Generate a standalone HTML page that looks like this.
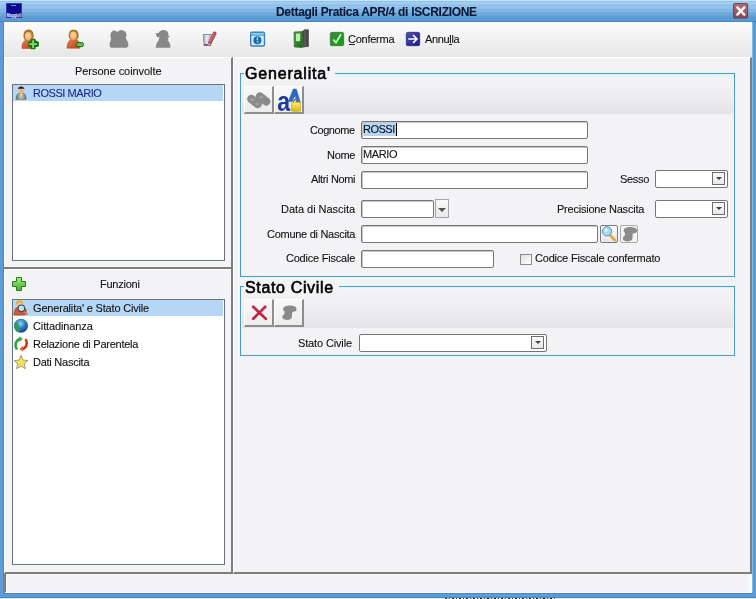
<!DOCTYPE html>
<html><head><meta charset="utf-8">
<style>
*{margin:0;padding:0;box-sizing:border-box}
html,body{width:756px;height:599px;overflow:hidden}
body{position:relative;background:#5b9bd6;font-family:"Liberation Sans",sans-serif;font-size:11px;color:#000}
.a{position:absolute}
svg.a{overflow:visible}
.t{position:absolute;white-space:nowrap;line-height:1;color:#111;letter-spacing:-0.3px;-webkit-text-stroke:0.1px currentColor;will-change:transform}
#title{left:0;top:0;width:756px;height:22px;background:linear-gradient(#c2e4fc 0px,#c2e4fc 1px,#a6d0f2 1px,#9ac8ee 5px,#8ebfe9 9px,#7db3e2 12px,#6aa6da 15px,#5b9bd3 17px,#5a9ad2 21px,#4a7cb0 21px,#4a7cb0 22px)}
#stripes{left:0;top:1px;width:756px;height:16px;background:repeating-linear-gradient(rgba(50,100,160,.12) 0px,rgba(50,100,160,.12) 1px,rgba(255,255,255,0) 1px,rgba(255,255,255,0) 4px)}
.inp{position:absolute;background:#fff;border:1px solid #767676;border-radius:2px;height:18px;box-shadow:inset 1px 1px 0 #c8c8c8}
.cmb{position:absolute;background:#fff;border:1px solid #767676;border-radius:2px;height:18px}
.dd{position:absolute;width:13px;height:13px;border:1px solid #6e6e6e;background:linear-gradient(#fafafa,#e8e8e8)}
.dd:after{content:"";position:absolute;left:2.5px;top:4px;border-left:3.5px solid transparent;border-right:3.5px solid transparent;border-top:3.5px solid #404040}
.lbl{position:absolute;white-space:nowrap;line-height:1;text-align:right;color:#111;letter-spacing:-0.3px;-webkit-text-stroke:0.1px currentColor;will-change:transform}
.grp{position:absolute;border:1px solid #4e9cbc;box-shadow:inset 1px 1px 0 #dcf8fe, 0 0 0 1px #e0fafe}
.gt{position:absolute;will-change:transform;white-space:nowrap;line-height:1;font-size:15px;font-weight:normal;-webkit-text-stroke:0.6px #000;letter-spacing:0.95px;color:#000;background:#f3f3f6;padding:0 6px 0 2px}
.tbs{position:absolute;background:linear-gradient(#f4f4f6,#efeff1 45%,#e4e4e6)}
.btn{position:absolute;width:30px;height:28px;background:linear-gradient(#f8f8f8,#ececec);border-right:2px solid #8d8d8d;border-bottom:2px solid #8d8d8d;border-top:1px solid #fff;border-left:1px solid #fff}
</style></head><body>
<!-- title bar -->
<div id="title" class="a"></div>
<div id="stripes" class="a"></div>
<div class="t" style="left:276px;top:6px;font-size:12px;font-weight:bold;color:#0c1838;letter-spacing:-0.3px">Dettagli Pratica APR/4 di ISCRIZIONE</div>

<!-- client -->
<div class="a" style="left:3px;top:21px;width:750px;height:573px;background:#4f86bb"></div>
<div class="a" style="left:4px;top:22px;width:748px;height:571px;background:#f3f3f6"></div>
<!-- toolbar -->
<div class="a" style="left:4px;top:22px;width:748px;height:35px;background:linear-gradient(#fbfbfb,#f2f2f2 50%,#e6e6e6)"></div>

<!-- toolbar icons -->
<div class="t" style="left:348px;top:34px;letter-spacing:-0.25px">Conferma</div>
<div class="a" style="left:349px;top:44px;width:6px;height:1px;background:#222"></div>
<div class="t" style="left:425px;top:34px;letter-spacing:-0.35px">Annulla</div>
<div class="a" style="left:449px;top:44px;width:3px;height:1px;background:#222"></div>

<!-- left panel -->
<div class="a" style="left:4px;top:57px;width:229px;height:517px;background:#f3f3f6;border-top:1px solid #fff;border-left:1px solid #fff;border-right:2px solid #7d7d7d;border-bottom:2px solid #7d7d7d"></div>
<div class="a" style="left:4px;top:267px;width:227px;height:2px;background:#7d7d7d"></div>
<div class="a" style="left:4px;top:269px;width:227px;height:1px;background:#fff"></div>
<div class="t" style="left:75px;top:66px;letter-spacing:-0.05px">Persone coinvolte</div>
<div class="a" style="left:12px;top:84px;width:213px;height:177px;background:#fff;border:1px solid #6a747e"></div>
<div class="a" style="left:13px;top:85px;width:210px;height:16px;background:#b6d6f6"></div>
<div class="t" style="left:32.5px;top:88px;color:#1a2a8a;letter-spacing:-0.45px">ROSSI MARIO</div>

<div class="t" style="left:100px;top:279px;letter-spacing:-0.25px">Funzioni</div>
<div class="a" style="left:12px;top:299px;width:213px;height:266px;background:#fff;border:1px solid #6a747e"></div>
<div class="a" style="left:13px;top:300px;width:210px;height:16px;background:#b6d6f6"></div>
<div class="t" style="left:33px;top:303px;letter-spacing:-0.18px">Generalita' e Stato Civile</div>
<div class="t" style="left:33px;top:321px;letter-spacing:-0.12px">Cittadinanza</div>
<div class="t" style="left:33px;top:339px;letter-spacing:-0.25px">Relazione di Parentela</div>
<div class="t" style="left:33px;top:357px;letter-spacing:-0.25px">Dati Nascita</div>

<!-- right panel -->
<div class="a" style="left:233px;top:57px;width:519px;height:517px;background:#f3f3f6;border-top:1px solid #fff;border-left:1px solid #fff;border-right:2px solid #7d7d7d;border-bottom:2px solid #7d7d7d"></div>

<!-- Generalita group -->
<div class="grp" style="left:240px;top:73px;width:495px;height:204px"></div>
<div class="tbs" style="left:242px;top:75px;width:491px;height:39px"></div>
<div class="gt" style="left:244px;top:66px;font-size:16px;letter-spacing:0.82px;padding:0 3.8px 0 1px">Generalita'</div>
<div class="btn" style="left:244px;top:86px"></div>
<div class="btn" style="left:274px;top:86px"></div>

<div class="lbl" style="right:401px;top:125px;letter-spacing:-0.45px">Cognome</div>
<div class="inp" style="left:361px;top:121px;width:227px"></div>
<div class="a" style="left:363px;top:123px;width:33px;height:13px;background:#b6d6f6"></div>
<div class="a" style="left:396px;top:123px;width:1px;height:13px;background:#000"></div>
<div class="t" style="left:363px;top:124px;letter-spacing:-0.5px">ROSSI</div>
<div class="lbl" style="right:401px;top:150px">Nome</div>
<div class="inp" style="left:361px;top:146px;width:227px"></div>
<div class="t" style="left:363px;top:149px;letter-spacing:-0.4px">MARIO</div>
<div class="lbl" style="right:401px;top:174px;letter-spacing:-0.35px">Altri Nomi</div>
<div class="inp" style="left:361px;top:171px;width:227px"></div>
<div class="lbl" style="right:107px;top:174px;letter-spacing:-0.3px">Sesso</div>
<div class="cmb" style="left:655px;top:170px;width:73px"></div>
<div class="dd" style="left:712px;top:172px"></div>

<div class="lbl" style="right:401px;top:204px;letter-spacing:-0.04px">Data di Nascita</div>
<div class="inp" style="left:361px;top:200px;width:73px"></div>
<div class="a" style="left:435px;top:199px;width:14px;height:19px;border:1px solid #a4a4a4;background:linear-gradient(#f8f8f8,#e8e8ea)"></div>
<div class="a" style="left:437.5px;top:207.5px;width:0;height:0;border-left:4.5px solid transparent;border-right:4.5px solid transparent;border-top:4.5px solid #505050"></div>
<div class="lbl" style="right:112px;top:204px;letter-spacing:-0.22px">Precisione Nascita</div>
<div class="cmb" style="left:655px;top:200px;width:73px"></div>
<div class="dd" style="left:712px;top:202px"></div>

<div class="lbl" style="right:401px;top:229px;letter-spacing:-0.28px">Comune di Nascita</div>
<div class="inp" style="left:361px;top:225px;width:237px"></div>
<div class="a" style="left:600px;top:225px;width:18px;height:18px;border:1px solid #7a7a7a;border-radius:2px;background:linear-gradient(#fafafa,#e6e6f0)"></div>
<div class="a" style="left:620px;top:225px;width:18px;height:18px;border:1px solid #a8a8a8;border-radius:2px;background:#f4f4f4"></div>

<div class="lbl" style="right:401px;top:253px;letter-spacing:-0.22px">Codice Fiscale</div>
<div class="inp" style="left:361px;top:250px;width:133px"></div>
<div class="a" style="left:520px;top:254px;width:12px;height:11px;border:1px solid #8a8a8a;background:linear-gradient(135deg,#e0e0e0,#fff)"></div>
<div class="t" style="left:534.5px;top:253px;letter-spacing:-0.2px">Codice Fiscale confermato</div>

<!-- Stato civile group -->
<div class="grp" style="left:240px;top:286px;width:495px;height:70px"></div>
<div class="tbs" style="left:242px;top:288px;width:491px;height:40px"></div>
<div class="gt" style="left:243.5px;top:279.5px;font-size:16px;letter-spacing:0.65px;padding:0 5.4px 0 1px">Stato Civile</div>
<div class="btn" style="left:244px;top:299px"></div>
<div class="btn" style="left:274px;top:299px"></div>
<div class="lbl" style="right:404px;top:338px;letter-spacing:-0.14px">Stato Civile</div>
<div class="cmb" style="left:359px;top:334px;width:188px"></div>
<div class="dd" style="left:531px;top:336px"></div>

<!-- status bar -->
<div class="a" style="left:4px;top:574px;width:748px;height:19px;background:#f4f4f7;border-left:2px solid #7d7d7d;border-bottom:1px solid #fff;border-right:3px solid #fbfbfd"></div>
<div class="a" style="left:752px;top:22px;width:1px;height:571px;background:#84b6e2"></div>
<div class="a" style="left:0;top:597px;width:756px;height:1px;background:#4f86ba"></div>
<div class="a" style="left:0;top:598px;width:756px;height:1px;background:#dde9f5"></div>
<div class="a" style="left:445px;top:598px;width:112px;height:1px;background:repeating-linear-gradient(90deg,#222 0 2px,transparent 2px 4px,#444 4px 5px,transparent 5px 7px)"></div>
<svg class="a" style="left:0;top:0;pointer-events:none" width="756" height="599" viewBox="0 0 756 599">
<defs>
 <filter id="bl" x="-20%" y="-20%" width="140%" height="140%"><feGaussianBlur stdDeviation="0.45"/></filter>
 <filter id="bl2" x="-20%" y="-20%" width="140%" height="140%"><feGaussianBlur stdDeviation="0.3"/></filter>
 <radialGradient id="face" cx="0.45" cy="0.4" r="0.65"><stop offset="0" stop-color="#ffdca8"/><stop offset="1" stop-color="#eaa058"/></radialGradient>
 <linearGradient id="body" x1="0" y1="0" x2="1" y2="1"><stop offset="0" stop-color="#f08048"/><stop offset="1" stop-color="#b83818"/></linearGradient>
 <linearGradient id="gck" x1="0" y1="0" x2="1" y2="1"><stop offset="0" stop-color="#3a8a3a"/><stop offset="1" stop-color="#10a010"/></linearGradient>
 <linearGradient id="gar" x1="0" y1="0" x2="1" y2="1"><stop offset="0" stop-color="#5050a8"/><stop offset="1" stop-color="#1a1a90"/></linearGradient>
 <linearGradient id="doc" x1="0" y1="0" x2="1" y2="0"><stop offset="0" stop-color="#a0a8b8"/><stop offset="0.45" stop-color="#e4eaf6"/><stop offset="1" stop-color="#a8b0c0"/></linearGradient>
 <linearGradient id="gbk" x1="0" y1="0" x2="1" y2="1"><stop offset="0" stop-color="#50a050"/><stop offset="1" stop-color="#1a6a1a"/></linearGradient>
 <linearGradient id="suit" x1="0" y1="0" x2="1" y2="0"><stop offset="0" stop-color="#6a746a"/><stop offset="0.5" stop-color="#c4ccbc"/><stop offset="1" stop-color="#6a746a"/></linearGradient>
 <linearGradient id="gpl" x1="0" y1="0" x2="0" y2="1"><stop offset="0" stop-color="#a0f080"/><stop offset="1" stop-color="#40b030"/></linearGradient>
 <radialGradient id="glb" cx="0.45" cy="0.35" r="0.7"><stop offset="0" stop-color="#90d8fa"/><stop offset="0.5" stop-color="#2a78c0"/><stop offset="1" stop-color="#0a3a80"/></radialGradient>
 <linearGradient id="lock" x1="0" y1="0" x2="0" y2="1"><stop offset="0" stop-color="#f8f070"/><stop offset="1" stop-color="#e0b800"/></linearGradient>
</defs>

<!-- title logo -->
<rect x="6" y="3" width="16" height="15" fill="#0a0a8e"/>
<rect x="6.5" y="3.5" width="15" height="14" fill="none" stroke="#5a5ac0" stroke-width="0.6"/>
<rect x="11" y="5" width="5" height="0.8" fill="#a0a0e0"/>
<text x="6.8" y="16.8" font-family="Liberation Sans" font-weight="bold" font-size="5" fill="#fff" textLength="14.4" lengthAdjust="spacingAndGlyphs">Maggioli</text>

<!-- close button -->
<defs><linearGradient id="gcl" x1="0" y1="0" x2="0" y2="1"><stop offset="0" stop-color="#b87072"/><stop offset="1" stop-color="#8a4a58"/></linearGradient></defs>
<rect x="733.6" y="3.6" width="14" height="14.4" rx="1" fill="url(#gcl)" stroke="#5a3850" stroke-width="0.9"/>
<path d="M737.3 7.4 L744.3 14.6 M744.3 7.4 L737.3 14.6" stroke="#fff" stroke-width="2.3" stroke-linecap="round"/>

<!-- toolbar icon 1: person add -->
<g filter="url(#bl2)">
 <path d="M22 48.5 C21.8 44 23 41 26 40.3 L30 40.3 C32.5 41 34 43 34 48.5 Z" fill="url(#body)" stroke="#a84020" stroke-width="0.5"/>
 <path d="M23.6 37 C23 31.5 25.5 29.6 28.6 29.6 C31.8 29.6 34 31.5 33.6 37 C33.4 39.5 32 41 28.6 41 C25.2 41 23.8 39.5 23.6 37Z" fill="#a8782e"/>
 <ellipse cx="28.3" cy="36.3" rx="3.4" ry="4.3" fill="url(#face)"/>
 <path d="M31 39.2h4.2v2.8h3.2v4.2h-3.2v2.6h-4.2v-2.6h-2.4v-4.2h2.4z" fill="#1a6e1a" stroke="#1a6e1a" stroke-width="0.8" stroke-linejoin="round"/>
 <rect x="29.4" y="40.5" width="8.6" height="6.8" rx="2.5" fill="#1a6e1a"/>
 <path d="M32.2 40.3h1.9v2.9h2.9v1.9h-2.9v2.9h-1.9v-2.9h-2.9v-1.9h2.9z" fill="#80e064"/>
</g>
<!-- icon 2: person -->
<g filter="url(#bl2)">
 <path d="M67 48.2 C67 43 68.8 40 72 39.5 L75.5 39.5 C78.5 40 79.8 43 79.8 48.2 Z" fill="url(#body)" stroke="#a84020" stroke-width="0.5"/>
 <path d="M68.8 36.5 C68.3 31.5 70.5 29.8 73.7 29.8 C76.9 29.8 79 31.5 78.6 36.5 C78.4 39 77 40.3 73.7 40.3 C70.4 40.3 69 39 68.8 36.5Z" fill="#a8782e"/>
 <ellipse cx="73.4" cy="35.8" rx="3.4" ry="4.2" fill="url(#face)"/>
 <rect x="76" y="42.5" width="7.5" height="4.2" rx="2" fill="#58c048" stroke="#206a18" stroke-width="1"/>
</g>
<!-- icon 3: gray group -->
<g fill="#878787" filter="url(#bl)">
 <ellipse cx="114.3" cy="35.4" rx="3.9" ry="4.9"/>
 <ellipse cx="121.5" cy="35.2" rx="5" ry="5.3"/>
 <path d="M111 38 L126 38 L127 41 L110.5 41Z"/>
 <path d="M109.6 45 C109.6 41 111.5 39.3 115 39.3 L123 39.3 C126.5 39.3 128.3 41 128.3 45 C128.3 47.5 127 47.8 124 47.8 L113 47.8 C110.5 47.8 109.6 47.5 109.6 45Z"/>
</g>
<!-- icon 4: gray hat person -->
<g fill="#888" filter="url(#bl)">
 <ellipse cx="163.5" cy="34.8" rx="4.9" ry="4.9"/>
 <path d="M155.5 33.2 L159.5 32.8 L160.5 37 L157 37.3Z"/>
 <path d="M167 35.5 L170 36.3 L167.5 38.5Z"/>
 <path d="M159.5 37.5 L167.5 37.5 L168.5 40 L158.5 40Z"/>
 <path d="M155.8 47.7 C156 42.5 158.5 39.2 162 39 L164.5 39 C168 39.2 170.4 42.5 170.4 47.7Z"/>
</g>
<!-- icon 5: edit -->
<g filter="url(#bl2)">
 <path d="M203.2 34.5 L211.5 34.5 L211 44.8 L204 44.8Z" fill="url(#doc)" stroke="#7a8292" stroke-width="0.8"/>
 <path d="M203.8 45 L211 45" stroke="#2a3040" stroke-width="1.2"/>
 <path d="M214.6 33.4 L209.8 42.8" stroke="#b84858" stroke-width="3.8" stroke-linecap="round"/>
 <path d="M213.8 33.6 L209.6 42" stroke="#e890a0" stroke-width="0.8"/>
 <path d="M208.6 43.3 L208.4 45.2 L210.6 44.2Z" fill="#f0e8e0"/>
</g>
<!-- icon 6: info window -->
<g filter="url(#bl2)">
 <rect x="250.7" y="32.2" width="13.8" height="13.8" rx="1.5" fill="#d4eefa" stroke="#3a80b8" stroke-width="1.4"/>
 <rect x="251.4" y="32.9" width="12.4" height="1.8" fill="#80d0f2"/>
 <path d="M251 35.2 H264.2" stroke="#3a80b8" stroke-width="0.9"/>
 <circle cx="257.4" cy="40.3" r="4" fill="#1a68b0"/>
 <rect x="256.7" y="37.3" width="1.5" height="3" fill="#90e0fa"/>
 <rect x="256.7" y="41.2" width="1.5" height="1.5" fill="#90e0fa"/>
</g>
<!-- icon 7: green book -->
<g filter="url(#bl2)">
 <path d="M302 31.5 L304.5 29.3 L308.8 29.6 L308.8 46.8 L302.5 47.6Z" fill="#4a4a4a"/>
 <path d="M305 29.6 L305 46.5" stroke="#6e6e6e" stroke-width="0.7"/>
 <path d="M294 32 L302.4 31.6 L302.4 47.6 L294.3 47Z" fill="url(#gbk)" stroke="#1e5a1e" stroke-width="0.6"/>
 <rect x="296" y="33.6" width="4.2" height="7.6" fill="#b8f0b0"/>
</g>
<!-- check -->
<g filter="url(#bl2)">
 <rect x="330.3" y="32.3" width="13.4" height="13.4" rx="1.5" fill="url(#gck)" stroke="#1e6a1e" stroke-width="0.6"/>
 <path d="M333.3 39.6 L336 42.6 L341 34.2" fill="none" stroke="#c8ffc0" stroke-width="1.7"/>
</g>
<!-- arrow -->
<g filter="url(#bl2)">
 <rect x="406.3" y="32.3" width="13.4" height="13.4" rx="1.5" fill="url(#gar)" stroke="#14146a" stroke-width="0.6"/>
 <path d="M408.3 39 H417 M413 35 L417 39 L413 43" fill="none" stroke="#fff" stroke-width="1.6"/>
</g>

<!-- list person icon -->
<g filter="url(#bl2)">
 <path d="M16.2 99.3 C16.2 95 17.8 93 20.5 93 L22 93 C24.5 93 26.1 95 26.1 99.3Z" fill="url(#suit)" stroke="#56605a" stroke-width="0.6"/>
 <path d="M20.6 93.2 L21.2 97.5 L21.8 93.2Z" fill="#f0e8c8"/>
 <ellipse cx="21.2" cy="90.8" rx="2.6" ry="3" fill="#f2b474"/>
 <path d="M17.9 89.5 C17.9 85.5 24.4 85.5 24.4 89.5 L24 88.8 L18.3 88.8Z" fill="#2a1a10"/>
</g>

<!-- funzioni plus -->
<path d="M16.5 277.5 H21.5 V281.5 H25.5 V286.5 H21.5 V290.5 H16.5 V286.5 H12.5 V281.5 H16.5Z" fill="url(#gpl)" stroke="#2a7a20" stroke-width="1"/>

<!-- generalita icon -->
<g filter="url(#bl2)">
 <path d="M14 315 C14 310 15.5 307 19 307 L22 307 C25 307 26 309 26.5 311 L25 315Z" fill="#d05a38" stroke="#a03a20" stroke-width="0.6"/>
 <ellipse cx="19.5" cy="303.3" rx="3.5" ry="3" fill="#e0b050"/>
 <ellipse cx="19.8" cy="304.5" rx="2.4" ry="2.1" fill="#f6c890"/>
 <path d="M23.5 311.5 L27 314" stroke="#c88040" stroke-width="2" stroke-linecap="round"/>
 <circle cx="21.4" cy="308.3" r="3.3" fill="#b8e4f8" stroke="#404850" stroke-width="1.1"/>
</g>
<!-- globe -->
<g filter="url(#bl2)">
 <circle cx="21" cy="325.7" r="7" fill="url(#glb)"/>
 <path d="M14.3 323 C16 321.5 18.5 322.5 19 325 C19.5 327.5 21 328.5 20 331 C19.5 332.3 18 332.5 16.5 331.8 C14.5 330 13.8 326 14.3 323Z" fill="#30a050" opacity="0.8"/>
 <path d="M22 320 C24 319.5 26 320.5 26.5 322 C25 322.5 23.5 322 22 320Z" fill="#40b060" opacity="0.6"/>
</g>
<!-- relazione -->
<g filter="url(#bl2)">
 <path d="M16.5 348.5 C14.5 345 15.5 340.5 20 339" fill="none" stroke="#30a040" stroke-width="2.6" stroke-linecap="round"/>
 <path d="M19 336.3 L23 338.8 L19.5 342Z" fill="#40b048"/>
 <path d="M26 340 C28 344 26 348.5 21.5 349" fill="none" stroke="#c83820" stroke-width="2.6" stroke-linecap="round"/>
 <path d="M23 346 L19.5 349 L23 351.5Z" fill="#e86030"/>
</g>
<!-- star -->
<path d="M21 355.3 L23 360.1 L28 360.5 L24.2 363.7 L25.4 368.7 L21 366 L16.6 368.7 L17.8 363.7 L14 360.5 L19 360.1Z" fill="#f6e060" stroke="#9a9070" stroke-width="0.9" stroke-linejoin="round" filter="url(#bl2)"/>

<!-- binoculars -->
<defs><filter id="bl3" x="-20%" y="-20%" width="140%" height="140%"><feGaussianBlur stdDeviation="0.6"/></filter></defs>
<g fill="#8a8a8a" filter="url(#bl3)">
 <rect x="246.3" y="97.3" width="16.5" height="8.4" rx="4.2" transform="rotate(38 254.5 101.5)"/>
 <rect x="254.8" y="94.8" width="16.5" height="8.4" rx="4.2" transform="rotate(38 263 99)"/>
</g>
<g fill="#a0a0a0" filter="url(#bl3)"><ellipse cx="252.5" cy="99.5" rx="2.2" ry="1.6"/><ellipse cx="261" cy="97" rx="2.2" ry="1.6"/><ellipse cx="257" cy="104" rx="1.8" ry="1.3"/></g>
<!-- a + lock -->
<g filter="url(#bl2)">
 <path d="M288.3 101.5 L293.3 89 L296.3 89 L300.5 103 L296.8 103 L295 95.5 L292 101.5Z" fill="#2a6cc4" stroke="#1e58a8" stroke-width="0.5"/>
 <text x="0" y="0" font-family="Liberation Sans" font-weight="bold" font-size="22" fill="#1a3a98" transform="translate(277.2 110.5) scale(1.05 1.25)">a</text>
 <path d="M293.2 103 C293.2 98.3 298.8 98.3 298.8 103" fill="none" stroke="#707080" stroke-width="1.4"/>
 <rect x="291.5" y="102.3" width="9" height="9" rx="1" fill="url(#lock)" stroke="#a89010" stroke-width="0.5"/>
</g>
<!-- red X -->
<path d="M253.2 306.8 L265.8 318.8 M265.3 306.8 L253.2 318.8" stroke="#c02646" stroke-width="2.7" stroke-linecap="round" filter="url(#bl2)"/>
<!-- scroll gray (stato civile button 2) -->
<path d="M284 307 C287 305 293 305 295.5 307 C297.3 308.5 296.8 311.3 294.5 311.5 L292.3 312 L291.7 318 C290 320.5 285 320.5 282.5 318.3 C281.8 316.3 283.3 314.6 284.2 314.3 L284.6 311.5 C283 311 282.5 308.5 284 307Z" fill="#8a8a8a" filter="url(#bl)"/>
<!-- magnifier -->
<g filter="url(#bl2)">
 <path d="M610.3 235.5 L614.8 240" stroke="#e8a848" stroke-width="3" stroke-linecap="round"/>
 <circle cx="607" cy="231.3" r="4.6" fill="#a4dcf2" stroke="#5a90b0" stroke-width="1"/>
 <circle cx="606" cy="230" r="1.8" fill="#e0f6ff"/>
</g>
<!-- scroll gray (comune button 2) -->
<path d="M624.5 228.5 C627.5 226.5 633.5 226.5 636 228.5 C637.8 230 637.3 232.8 635 233 L632.8 233.5 L632.2 239.5 C630.5 242 625.5 242 623 239.8 C622.3 237.8 623.8 236.1 624.7 235.8 L625.1 233 C623.5 232.5 623 230 624.5 228.5Z" fill="#8c8c8c" filter="url(#bl)"/>
</svg>
</body></html>
